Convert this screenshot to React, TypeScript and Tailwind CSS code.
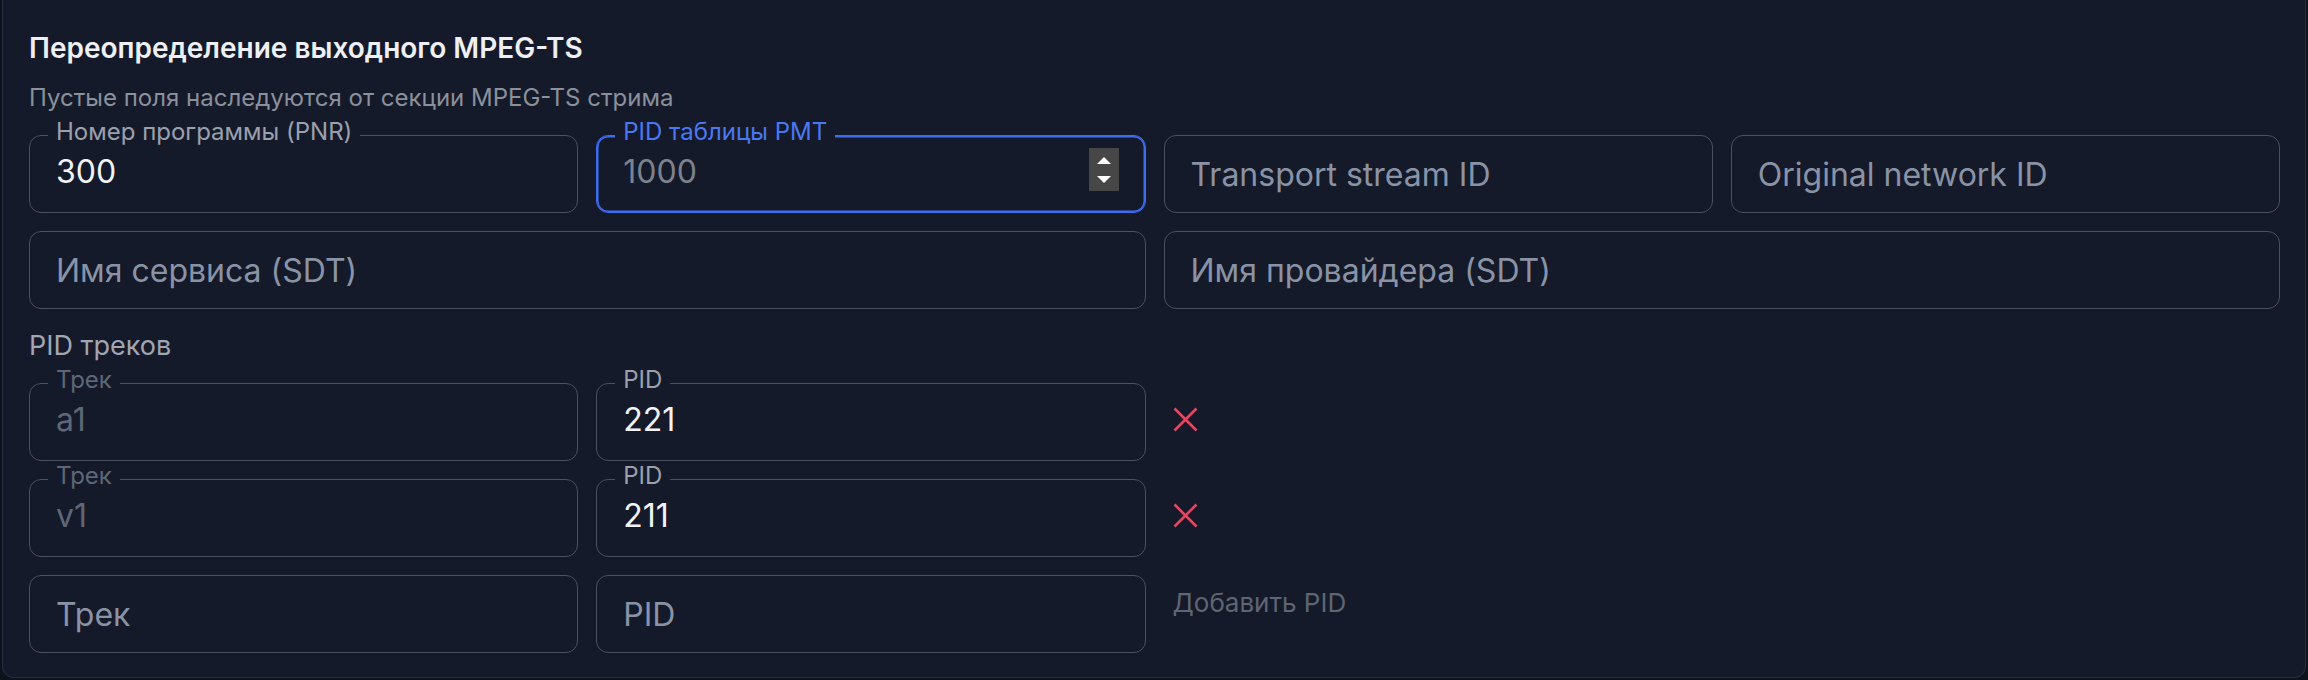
import clsx from "clsx";

type FieldProps = {
  label?: string;
  value?: string;
  placeholder?: string;
  focused?: boolean;
  disabled?: boolean;
  spinner?: boolean;
  className?: string;
};

function Spinner() {
  return (
    <div className="ml-auto w-[30px] h-[43px] bg-[#474747] flex flex-col items-center justify-center gap-[12px] -mt-[5px]">
      <svg width="14" height="7" viewBox="0 0 14 7">
        <path d="M7 0L14 7H0z" fill="#ffffff" />
      </svg>
      <svg width="14" height="7" viewBox="0 0 14 7">
        <path d="M0 0H14L7 7z" fill="#ffffff" />
      </svg>
    </div>
  );
}

function Field({ label, value, placeholder, focused, disabled, spinner, className }: FieldProps) {
  return (
    <div
      className={clsx(
        "relative h-[78px] rounded-xl border-[1.5px] flex items-center pl-[26px] pr-[26px]",
        focused ? "border-[#3d6cf3] shadow-[inset_0_0_0_1.5px_#3d6cf3]" : "border-[#4a505d]",
        label ? "pb-[4px]" : "pt-[2px]",
        className
      )}
    >
      {label && (
        <span
          className={clsx(
            "absolute -top-[16.5px] left-[18px] px-[8px] bg-[#151a2a] text-[24px] leading-[24px] whitespace-nowrap",
            focused ? "text-[#4a78f2]" : disabled ? "text-[#5f6676]" : "text-[#9aa1ad]"
          )}
        >
          {label}
        </span>
      )}
      <span
        className={clsx(
          "text-[32px] leading-[38px] whitespace-nowrap",
          value === undefined
            ? "text-[#8a93a6]"
            : focused
            ? "text-[#7c828e]"
            : disabled
            ? "text-[#5f6676]"
            : "text-[#f1f3f6]"
        )}
      >
        {value ?? placeholder}
      </span>
      {spinner && <Spinner />}
    </div>
  );
}

function RemoveButton() {
  return (
    <button className="mt-[24px] ml-[9px] w-[25px] h-[25px] flex items-center justify-center">
      <svg width="25" height="25" viewBox="0 0 25 25" fill="none">
        <path d="M1.5 1.5L23.5 23.5M23.5 1.5L1.5 23.5" stroke="#f43f5e" strokeWidth="2.6" />
      </svg>
    </button>
  );
}

const tracks = [
  { name: "a1", pid: "221" },
  { name: "v1", pid: "211" },
];

export default function App() {
  return (
    <div className="w-[2308px] h-[680px] bg-[#0e121b] font-['Inter',sans-serif] px-[2px]">
      <div className="bg-[#151a2a] border border-t-0 border-[#272e40] rounded-b-xl pt-[31px] pl-[26px] pr-[25px] pb-[24px]">
        <h2 className="text-[28px] leading-[34px] font-semibold text-[#eef0f4]">
          Переопределение выходного MPEG-TS
        </h2>
        <p className="mt-[18px] text-[24px] leading-[30px] text-[#8a909c]">
          Пустые поля наследуются от секции MPEG-TS стрима
        </p>

        <div className="mt-[22px] grid grid-cols-4 gap-[18px]">
          <Field label="Номер программы (PNR)" value="300" />
          <Field label="PID таблицы PMT" value="1000" focused spinner />
          <Field placeholder="Transport stream ID" />
          <Field placeholder="Original network ID" />
          <Field placeholder="Имя сервиса (SDT)" className="col-span-2" />
          <Field placeholder="Имя провайдера (SDT)" className="col-span-2" />
        </div>

        <div className="mt-[20px] text-[27px] leading-[34px] text-[#a0a6b2]">PID треков</div>

        <div className="mt-[20px] flex flex-col gap-[18px]">
          {tracks.map((t) => (
            <div key={t.name} className="grid grid-cols-4 gap-[18px] items-start">
              <Field label="Трек" value={t.name} disabled />
              <Field label="PID" value={t.pid} />
              <div>
                <RemoveButton />
              </div>
            </div>
          ))}
          <div className="grid grid-cols-4 gap-[18px] items-start">
            <Field placeholder="Трек" />
            <Field placeholder="PID" />
            <button className="mt-[12px] ml-[9px] text-left text-[26px] leading-[32px] text-[#5f6573]">
              Добавить PID
            </button>
          </div>
        </div>
      </div>
    </div>
  );
}
